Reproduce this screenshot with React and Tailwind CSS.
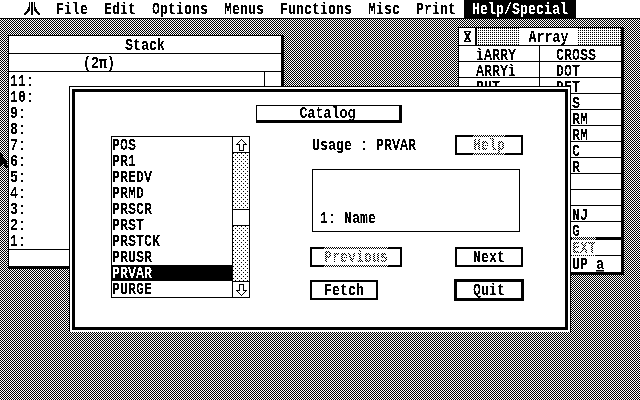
import React from 'react';

// Tall narrow text, close to the 8x16 system font
const T = ({ children, className = '' }) => (
  <span className={`inline-block origin-center scale-y-[1.3] translate-y-px leading-3 whitespace-pre ${className}`}>{children}</span>
);

const Dots = ({ id, size, points }) => (
  <svg width="100%" height="100%" className="block" shapeRendering="crispEdges">
    <defs>
      <pattern id={id} width={size} height={size} patternUnits="userSpaceOnUse">
        {points.map(([x, y]) => <rect key={`${x}-${y}`} x={x} y={y} width="1" height="1" fill="#000" />)}
      </pattern>
    </defs>
    <rect width="100%" height="100%" fill={`url(#${id})`} />
  </svg>
);

// Disabled labels are black text with a white checker laid over them
const Grey = ({ id, children }) => (
  <span className="relative inline-block">
    <T>{children}</T>
    <span className="absolute -inset-y-1 inset-x-0 bg-white mix-blend-lighten">
      <Dots id={id} size={2} points={[[0, 0], [1, 1]]} />
    </span>
  </span>
);

const Bitmap = ({ rows, className = '' }) => (
  <svg width={rows[0].length} height={rows.length} className={`block ${className}`} shapeRendering="crispEdges">
    {rows.map((row, y) => [...row].map((c, x) => (
      c === '#' ? <rect key={`${x}-${y}`} x={x} y={y} width="1" height="1" fill="#000" /> : null
    )))}
  </svg>
);

const logo = [
  '.....#.##.#.....',
  '.....#.##.#.....',
  '.....#.##.#.....',
  '.....#.##.#.....',
  '.....#.##.#.....',
  '....##.##.##....',
  '....##.##.##....',
  '...###.##.###...',
  '...###.##.###...',
  '..###..##..###..',
  '.###...##...###.',
  '###....##....###',
  '##.....##.....##',
];

const closeIcon = [
  '#######',
  '##...##',
  '.##.##.',
  '.#####.',
  '..###..',
  '..###..',
  '..###..',
  '.#####.',
  '.##.##.',
  '##...##',
  '#######',
];

const pointer = [
  '#.........',
  '##........',
  '##........',
  '###.......',
  '###.......',
  '####......',
  '#####.....',
  '#####.....',
  '######....',
  '#######...',
  '#######...',
  '########..',
  '###.###...',
  '#...###...',
  '.....###..',
  '.....###..',
];

const UpArrow = ({ flip }) => (
  <svg width="11" height="12" viewBox="0 0 11 12" className={`block ${flip ? 'rotate-180' : ''}`} shapeRendering="crispEdges">
    <path d="M5.5.5 10.5 5.5H7.5V11.5H3.5V5.5H.5Z" fill="none" stroke="#000" />
  </svg>
);

const Btn = ({ children, className = '' }) => (
  <div className={`h-5 border-2 border-black flex items-center justify-center bg-white ${className}`}>{children}</div>
);

const menus = ['File', 'Edit', 'Options', 'Menus', 'Functions', 'Misc', 'Print'];
const stackLevels = ['11:', '10:', '9:', '8:', '7:', '6:', '5:', '4:', '3:', '2:', '1:'];
const catalog = ['POS', 'PR1', 'PREDV', 'PRMD', 'PRSCR', 'PRST', 'PRSTCK', 'PRUSR', 'PRVAR', 'PURGE'];

const arrayRows = [
  ['ìARRY', 'CROSS'],
  ['ARRYì', 'DOT'],
  ['PUT', 'DET'],
];
const arrayTail = ['S', 'RM', 'RM', 'C', 'R', '', '', 'NJ', 'G'];

export default function App() {
  return (
    <div className="relative w-[640px] h-[400px] overflow-hidden contrast-[20] bg-white font-['Liberation_Mono',monospace] font-bold text-[13.33px] leading-4 text-black">
      {/* Desktop dither */}
      <div className="absolute inset-0">
        <Dots id="desk" size={2} points={[[0, 0], [1, 1]]} />
      </div>

      {/* Menu bar */}
      <div className="relative flex items-center h-[19px] pl-6 bg-white border-b border-black">
        <div className="mr-2 -mt-px"><Bitmap rows={logo} /></div>
        {menus.map(m => <div key={m} className="px-2"><T>{m}</T></div>)}
        <div className="px-2 h-[18px] flex items-center bg-black text-white"><T>Help/Special</T></div>
      </div>

      {/* Stack window */}
      <div className="absolute left-2 top-[35px] w-[276px] h-[234px] flex flex-col bg-white border-l border-t border-black border-r-[3px] border-b-[3px]">
        <div className="h-[18px] shrink-0 flex items-center justify-center border-b border-black"><T>Stack</T></div>
        <div className="h-[18px] shrink-0 flex items-center pl-[74px] border-b border-black"><T>(2π)</T></div>
        <div className="flex flex-1 border-b border-black">
          <div className="flex-1 pt-px pl-px">
            {stackLevels.map(l => <div key={l} className="h-4"><T>{l}</T></div>)}
          </div>
          <div className="w-[17px] border-l border-black" />
        </div>
        <div className="h-[17px] shrink-0" />
      </div>

      {/* Array window */}
      <div className="absolute left-[458px] top-[27px] w-[166px] h-[248px] flex flex-col bg-white border-l border-t border-black border-r-[3px] border-b-[3px]">
        <div className="flex h-[18px] shrink-0 border-b border-black">
          <div className="w-[18px] flex items-center justify-center border-r-2 border-black"><Bitmap rows={closeIcon} /></div>
          <div className="relative flex-1 ml-px">
            <Dots id="title" size={2} points={[[0, 0]]} />
            <div className="absolute inset-y-0 left-[42px] w-[57px] pt-px bg-white text-center"><T>Array</T></div>
          </div>
        </div>
        {arrayRows.map(([a, b]) => (
          <div key={a} className="flex h-4 shrink-0 border-b border-black">
            <div className="w-[81px] pl-[17px] pt-px border-r border-black"><T>{a}</T></div>
            <div className="pl-[16px] pt-px"><T>{b}</T></div>
          </div>
        ))}
        {arrayTail.map((r, i) => (
          <div key={i} className={`shrink-0 pl-[113px] pt-px border-black ${i === 8 ? 'h-[18px] border-b-[3px]' : 'h-4 border-b'}`}><T>{r}</T></div>
        ))}
        <div className="h-4 shrink-0 pl-[113px] border-b border-black"><Grey id="gExt">EXT</Grey></div>
        <div className="pl-[113px]"><T>UP </T><T className="underline">a</T></div>
      </div>

      {/* Catalog dialog */}
      <div className="absolute left-[69px] top-[86px] w-[502px] h-[246px] bg-white border-t border-x border-black p-[2px]">
        <div className="h-[241px] border-[3px] border-black flex flex-col items-center">
          <div className="mt-[13px] w-[146px] h-[18px] ml-[17px] flex items-center justify-center bg-white border-l border-t border-black border-r-[3px] border-b-[3px]">
            <T>Catalog</T>
          </div>
          <div className="flex mt-[13px] w-full pl-[36px]">
            {/* Function list */}
            <div className="flex w-[139px] h-[162px] border border-black">
              <div className="flex-1">
                {catalog.map(c => (
                  <div key={c} className={`h-4 ${c === 'PRVAR' ? 'bg-black text-white' : ''}`}><T>{c}</T></div>
                ))}
              </div>
              <div className="w-[17px] flex flex-col border-l border-black">
                <div className="h-4 shrink-0 flex items-center justify-center border-b border-black"><UpArrow /></div>
                <div className="h-[56px] shrink-0"><Dots id="trackA" size={4} points={[[0, 0], [2, 2]]} /></div>
                <div className="h-[17px] shrink-0 border-y border-black" />
                <div className="flex-1 min-h-0"><Dots id="trackB" size={4} points={[[0, 0], [2, 2]]} /></div>
                <div className="h-4 shrink-0 flex items-center justify-center border-t border-black"><UpArrow flip /></div>
              </div>
            </div>

            {/* Usage panel */}
            <div className="ml-[60px] w-[213px] -mt-px">
              <div className="flex items-center justify-between">
                <div className="pl-[2px]"><T>Usage : PRVAR</T></div>
                <Btn className="w-[68px]"><Grey id="gHelp">Help</Grey></Btn>
              </div>
              <div className="mt-[14px] ml-[2px] w-[208px] h-[63px] border border-black flex items-end pl-[7px] pb-[7px]">
                <T>1: Name</T>
              </div>
              <div className="mt-[15px] flex justify-between">
                <Btn className="w-[92px]"><Grey id="gPrev">Previous</Grey></Btn>
                <Btn className="w-[68px]"><T>Next</T></Btn>
              </div>
              <div className="mt-3 flex justify-between items-center">
                <Btn className="w-[68px]"><T>Fetch</T></Btn>
                <Btn className="w-[70px] h-[22px] border-[3px] -mr-px"><T>Quit</T></Btn>
              </div>
            </div>
          </div>
        </div>
      </div>

      {/* Mouse pointer */}
      <div className="absolute left-0 top-[152px]"><Bitmap rows={pointer} /></div>
    </div>
  );
}
